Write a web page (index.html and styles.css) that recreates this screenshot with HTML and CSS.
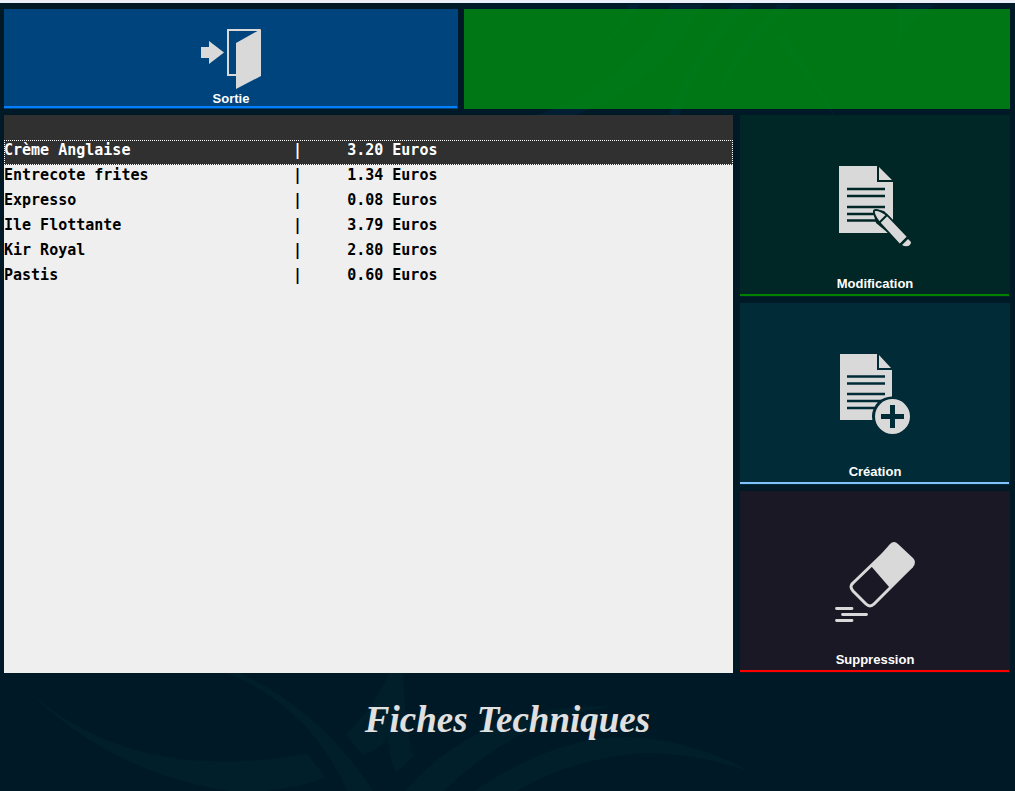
FILE: index.html
```html
<!DOCTYPE html>
<html lang="fr">
<head>
<meta charset="utf-8">
<title>Fiches Techniques</title>
<link rel="stylesheet" href="styles.css">
</head>
<body class="screen">
<svg class="backdrop" viewBox="0 0 1015 791" preserveAspectRatio="xMidYMid slice" aria-hidden="true">
  <g class="swirl-low">
    <path d="M18 680Q125 785 307 752L326 776Q290 790 240 791Q110 775 18 680Z"/>
    <path d="M226 665Q320 705 374 791H348Q310 705 226 671Z"/>
    <path d="M392 665Q375 705 346 733L363 754Q380 748 388 735Q388 755 396 772L413 755Q404 715 403 665Z"/>
    <path d="M404 791Q480 700 615 705Q520 715 442 791Z"/>
    <path d="M472 791Q560 730 640 736Q700 742 750 770Q690 750 640 752Q570 757 515 791Z"/>
  </g>
  <g class="swirl-high">
    <path d="M629 3Q620 30 588 50Q615 42 640 3Z"/>
    <path d="M670 3Q630 82 532 115H572Q665 82 702 3Z"/>
    <path d="M732 3Q690 55 667 118H678Q700 50 753 3Z"/>
    <path d="M778 3Q725 50 715 104Q735 55 792 3Z"/>
    <path d="M774 37L786 33Q830 100 859 160Q830 100 774 37Z"/>
    <path d="M898 3V30L894 52Q905 25 935 3Z"/>
  </g>
</svg>

<header class="topbar">
  <button class="tile tile-exit" type="button">
    <svg class="icon-exit" viewBox="0 0 60 60" aria-hidden="true">
      <path fill="currentColor" d="M0 18H8V12L23 23.500L8 35V29H0ZM35 14L60 0V47L35 60Z"/>
      <path fill="none" stroke="currentColor" stroke-width="2" d="M35 46H27V1H59"/>
    </svg>
    <span class="label">Sortie</span>
  </button>
  <div class="banner"></div>
</header>

<main class="content">
  <ul class="list" role="listbox" aria-label="Fiches techniques">
    <li class="row row-head" role="presentation"></li>
    <li class="row row-selected" role="option" aria-selected="true" tabindex="0"><span>Crème Anglaise</span><span>|</span><span>3.20 Euros</span></li>
    <li class="row" role="option"><span>Entrecote frites</span><span>|</span><span>1.34 Euros</span></li>
    <li class="row" role="option"><span>Expresso</span><span>|</span><span>0.08 Euros</span></li>
    <li class="row" role="option"><span>Ile Flottante</span><span>|</span><span>3.79 Euros</span></li>
    <li class="row" role="option"><span>Kir Royal</span><span>|</span><span>2.80 Euros</span></li>
    <li class="row" role="option"><span>Pastis</span><span>|</span><span>0.60 Euros</span></li>
  </ul>

  <nav class="actions" aria-label="Actions">
    <button class="tile tile-edit" type="button">
      <svg class="icon" viewBox="0 0 80 80" aria-hidden="true">
        <path fill="currentColor" d="M4 0H42V16H58V67H4ZM44 1L57 14H44Z"/>
        <path class="cut" d="M12 23H50M12 30H50M12 41H50M12 48H50M12 54.500H50"/>
        <path class="cut-fill" d="M40 43L49 45L79 75L74 82L70 81L41 57L38 46Z"/>
        <path fill="currentColor" stroke="#002625" stroke-width="1.800" stroke-linejoin="round" d="M39 44.500Q43 42.500 52 49L73 71L65 79L44 56Q38 48 39 44.500Z"/>
        <path fill="none" stroke="#002625" stroke-width="2" d="M52 49L44 57"/>
        <path fill="currentColor" d="M73 73L76 76Q76 81 69 80L67 79Z"/>
        <path fill="none" stroke="#002625" stroke-width="2" d="M73 71L65 79"/>
      </svg>
      <span class="label">Modification</span>
    </button>
    <button class="tile tile-add" type="button">
      <svg class="icon" viewBox="0 0 80 80" aria-hidden="true">
        <path fill="currentColor" d="M5 0H42V16H57V66H5ZM44 1L56 14H44Z"/>
        <path class="cut" d="M12 22.500H50M12 29.500H50M12 40H50M12 47H50M12 54H50"/>
        <circle class="cut-fill" cx="57" cy="62.500" r="20"/>
        <circle fill="currentColor" cx="57.500" cy="62.500" r="17.500"/>
        <path class="cut-fill" d="M55 51H60V60H69V65H60V74H55V65H46V60H55Z"/>
      </svg>
      <span class="label">Création</span>
    </button>
    <button class="tile tile-delete" type="button">
      <svg class="icon" viewBox="0 0 80 80" aria-hidden="true">
        <path fill="currentColor" d="M36 24L55 2Q59 -2 63 2L78 16Q82 20 78 25L55 46Z"/>
        <path fill="none" stroke="currentColor" stroke-width="3" stroke-linejoin="round" d="M57 3.500L18 41Q14 44.500 18 49L31 62Q35 66 39 62L77 24"/>
        <path fill="none" stroke="currentColor" stroke-width="2.800" stroke-linecap="round" d="M1.500 66.500H17M7.500 72.500H31.500M1.500 78.500H17"/>
      </svg>
      <span class="label">Suppression</span>
    </button>
  </nav>
</main>

<footer class="footer"><h1 class="title">Fiches Techniques</h1></footer>
</body>
</html>
```
FILE: styles.css
```css
* {
  box-sizing: border-box;
}

.screen {
  position: relative;
  display: flex;
  flex-direction: column;
  min-height: 100vh;
  margin: 0;
  border-top: 3px solid #ebeff7;
  background: #001926;
  font-family: "Liberation Sans", Arial, sans-serif;
}

.backdrop {
  position: absolute;
  top: 0;
  left: 0;
  z-index: -1;
  width: 100%;
  height: 100%;
}

.swirl-low {
  fill: #001f2b;
}

.swirl-high {
  fill: #001f33;
}

.topbar {
  display: grid;
  grid-template-columns: 454fr 546fr;
  gap: 6px;
  height: 112px;
  padding: 6px 5px 6px 4px;
}

.banner {
  background: rgb(0 142 18 / 80%);
}

.content {
  display: grid;
  flex: 1;
  grid-template-columns: 729fr 270fr;
  gap: 7px;
  padding: 0 5px 0 4px;
}

.tile {
  --tile: #00447e;
  --line: #0080ff;
  display: flex;
  flex-direction: column;
  align-items: center;
  justify-content: flex-end;
  gap: 30px;
  padding: 0 0 5px;
  border: 0;
  background: linear-gradient(var(--line), var(--line)) 0 calc(100% - 1px) / calc(100% - 1px) 2px no-repeat, var(--tile);
  color: #d9d9d9;
  font-family: inherit;
  cursor: pointer;
}

.tile-exit {
  gap: 2px;
  padding-bottom: 2px;
}

.tile-edit {
  --tile: #002625;
  --line: #008000;
}

.tile-add {
  --tile: #002b37;
  --line: #80c0ff;
}

.tile-delete {
  --tile: #1b1825;
  --line: #ff0000;
}

.label {
  color: #ffffff;
  font-size: 13px;
  font-weight: bold;
  line-height: 16px;
}

.icon {
  width: 80px;
  height: 80px;
  overflow: visible;
}

.icon-exit {
  width: 60px;
  height: 60px;
}

.cut {
  fill: none;
  stroke: var(--tile);
  stroke-width: 2.5;
}

.cut-fill {
  fill: var(--tile);
}

.list {
  margin: 0;
  padding: 0;
  background: #efefef;
  color: #000000;
  font-family: "DejaVu Sans Mono", Consolas, monospace;
  font-size: 15px;
  font-weight: bold;
  line-height: 20px;
  list-style: none;
}

.row {
  display: grid;
  grid-template-columns: 32ch 6ch 1fr;
  height: 25px;
}

.row-head {
  background: #303030;
}

.row-selected {
  outline: 1px dotted #ffffff;
  outline-offset: -1px;
  background: #303030;
  color: #ffffff;
}

.actions {
  display: grid;
  grid-template-rows: repeat(3, 1fr);
  gap: 6px;
}

.footer {
  height: 118px;
  padding-top: 27px;
}

.title {
  margin: 0;
  color: #e0e0e0;
  font-family: "Liberation Serif", "Times New Roman", serif;
  font-size: 37px;
  font-style: italic;
  font-weight: bold;
  line-height: 40px;
  text-align: center;
}
```
